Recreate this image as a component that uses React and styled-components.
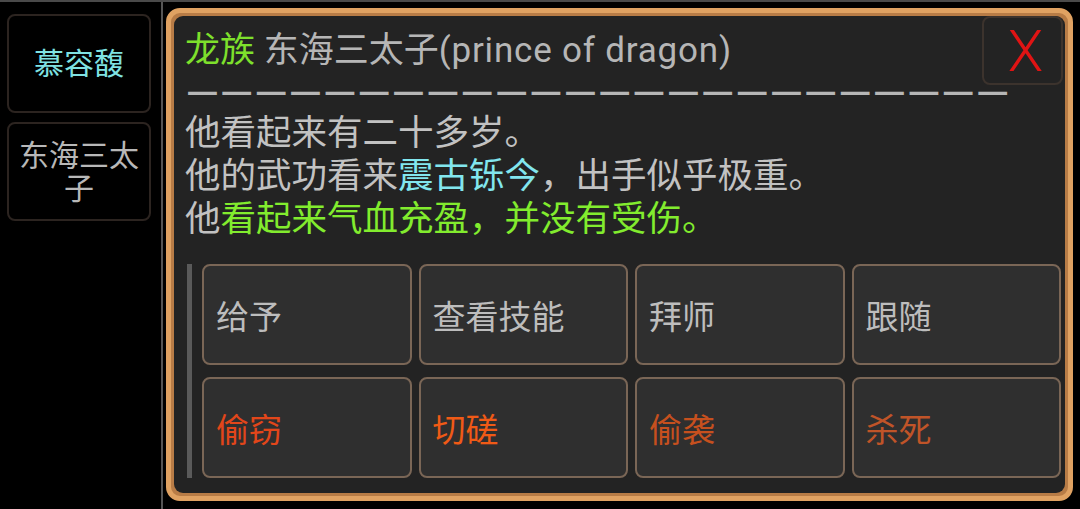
import React from 'react';
import styled, { createGlobalStyle } from 'styled-components';

const GlobalStyle = createGlobalStyle`
  html, body {
    margin: 0;
    padding: 0;
    background: #000;
  }
  body {
    font-family: Roboto, "Noto Sans CJK SC", sans-serif;
  }
`;

const Screen = styled.div`
  display: flex;
  width: 1080px;
  height: 509px;
  box-sizing: border-box;
  border-top: 2px solid #4a4a4a;
  background: #000;
  overflow: hidden;
`;

const Sidebar = styled.div`
  width: 163px;
  flex: none;
  box-sizing: border-box;
  border-right: 2px solid #555;
  padding: 12px 10px 0 7px;
  display: flex;
  flex-direction: column;
  gap: 9px;
`;

const NameTab = styled.div`
  height: 99px;
  box-sizing: border-box;
  border: 2px solid #2c2420;
  border-radius: 8px;
  display: flex;
  align-items: center;
  justify-content: center;
  padding: 0 6px;
  text-align: center;
  font-size: 30px;
  line-height: 33px;
  color: ${p => p.$color};
`;

const Main = styled.div`
  flex: 1;
  padding: 6px 7px 8px 3px;
  display: flex;
`;

const Panel = styled.div`
  flex: 1;
  box-sizing: border-box;
  border: 5px solid #e0a262;
  border-radius: 14px;
  background: #b87c46;
  padding: 3px;
  display: flex;
`;

const PanelInner = styled.div`
  flex: 1;
  background: #232323;
  border-radius: 9px;
  padding: 0 4px 15px 11px;
  display: flex;
  flex-direction: column;
`;

const TitleRow = styled.div`
  display: flex;
  align-items: center;
  height: 69px;
  margin-right: -2px;
`;

const Title = styled.div`
  flex: 1;
  font-size: 35px;
  line-height: 40px;
  color: #b6b6b6;
  white-space: nowrap;
`;

const Race = styled.span`
  color: #7ee02c;
`;

const Latin = styled.span`
  letter-spacing: 0.8px;
`;

const CloseButton = styled.div`
  width: 81px;
  height: 69px;
  box-sizing: border-box;
  border: 2px solid #3c332d;
  border-radius: 8px;
  display: flex;
  align-items: center;
  justify-content: center;
  padding-left: 6px;
  font-size: 58px;
  font-weight: 300;
  color: #e01414;
`;

const Divider = styled.div`
  font-size: 44px;
  line-height: 22px;
  height: 22px;
  margin-top: -2px;
  color: #b6b6b6;
  white-space: nowrap;
`;

const Desc = styled.div`
  margin-top: 7px;
  font-size: 35.5px;
  line-height: 43px;
  color: #c2c2c2;
`;

const Hl = styled.span`
  color: ${p => p.$color};
`;

const ActionArea = styled.div`
  margin-top: auto;
  border-left: 5px solid #5a5a5a;
  margin-left: 2px;
  padding-left: 10px;
  display: grid;
  grid-template-columns: repeat(4, 1fr);
  column-gap: 7px;
  row-gap: 12px;
`;

const ActionButton = styled.div`
  height: 101px;
  box-sizing: border-box;
  background: #2f2f2f;
  border: 2px solid #7a6656;
  border-radius: 8px;
  display: flex;
  align-items: center;
  padding-left: 12px;
  font-size: 33px;
  color: ${p => p.$color || '#bdbdbd'};
`;

const actions = [
  { label: '给予' },
  { label: '查看技能' },
  { label: '拜师' },
  { label: '跟随' },
  { label: '偷窃', color: '#e2461a' },
  { label: '切磋', color: '#f05a16' },
  { label: '偷袭', color: '#c6501e' },
  { label: '杀死', color: '#c05428' },
];

export default function App() {
  return (
    <>
      <GlobalStyle />
      <Screen>
        <Sidebar>
          <NameTab $color="#7fe2e2">慕容馥</NameTab>
          <NameTab $color="#b8b8b8">东海三太子</NameTab>
        </Sidebar>
        <Main>
          <Panel>
            <PanelInner>
              <TitleRow>
                <Title>
                  <Race>龙族</Race> 东海三太子<Latin>(prince of dragon)</Latin>
                </Title>
                <CloseButton>X</CloseButton>
              </TitleRow>
              <Divider>{'—'.repeat(24)}</Divider>
              <Desc>
                他看起来有二十多岁。<br />
                他的武功看来<Hl $color="#82e6ee">震古铄今</Hl>，出手似乎极重。<br />
                他<Hl $color="#82ec2e">看起来气血充盈，并没有受伤。</Hl>
              </Desc>
              <ActionArea>
                {actions.map(a => (
                  <ActionButton key={a.label} $color={a.color}>{a.label}</ActionButton>
                ))}
              </ActionArea>
            </PanelInner>
          </Panel>
        </Main>
      </Screen>
    </>
  );
}
